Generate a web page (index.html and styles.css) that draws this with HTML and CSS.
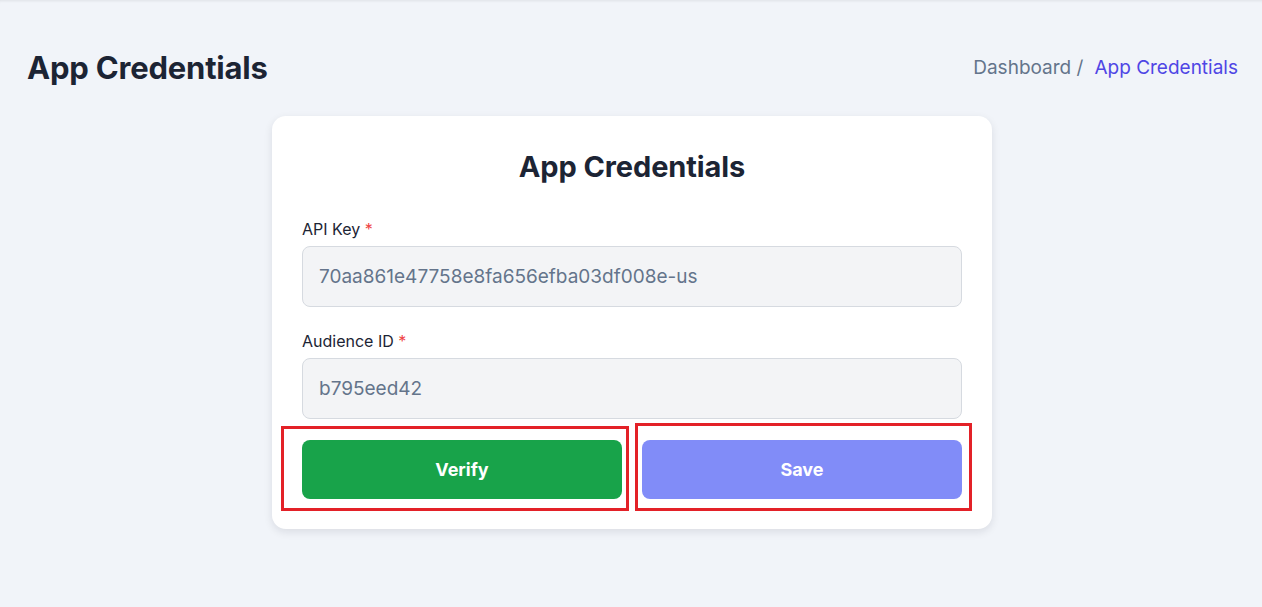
FILE: index.html
```html
<!DOCTYPE html>
<html lang="en">
<head>
<meta charset="utf-8">
<title>App Credentials</title>
<link rel="stylesheet" href="styles.css">
</head>
<body>
<main class="page">
  <header class="page-header">
    <h1 class="page-title">App Credentials</h1>
    <nav class="breadcrumb">
      <span class="crumb">Dashboard /</span>
      <span class="crumb crumb-active">App Credentials</span>
    </nav>
  </header>
  <section class="card">
    <h2 class="card-title">App Credentials</h2>
    <div class="field">
      <label class="field-label">API Key <span class="req">*</span></label>
      <div class="input">70aa861e47758e8fa656efba03df008e-us</div>
    </div>
    <div class="field">
      <label class="field-label">Audience ID <span class="req">*</span></label>
      <div class="input">b795eed42</div>
    </div>
    <div class="actions">
      <button class="btn btn-verify">Verify</button>
      <button class="btn btn-save">Save</button>
    </div>
  </section>
</main>
</body>
</html>
```

FILE: styles.css
```css
* { box-sizing: border-box; }
html, body { margin: 0; padding: 0; }
body {
  background: #f1f4f9;
  font-family: Inter, "Noto Sans", sans-serif;
  color: #1e293b;
  min-height: 607px;
  box-shadow: inset 0 3px 3px -2px rgba(0,0,0,0.08);
}
.page {
  padding: 45px 0 0 2px;
}
.page-header {
  display: flex;
  justify-content: space-between;
  align-items: center;
  height: 44px;
  padding: 0 24px 0 25px;
}
.page-title {
  margin: 0;
  font-size: 31px;
  font-weight: 700;
  color: #1c2434;
  letter-spacing: -0.2px;
}
.breadcrumb {
  display: flex;
  gap: 11px;
  font-size: 19px;
  color: #64748b;
}
.crumb-active { color: #4f46e5; }
.card {
  width: 720px;
  margin: 27px auto 0;
  background: #fff;
  border-radius: 14px;
  box-shadow: 0 3px 8px rgba(15, 23, 42, 0.1);
  padding: 33px 30px 30px;
}
.card-title {
  margin: 0 0 32px;
  text-align: center;
  font-size: 29px;
  line-height: 36px;
  font-weight: 700;
  color: #1c2434;
  letter-spacing: -0.1px;
}
.field { display: flex; flex-direction: column; }
.field + .field { margin-top: 22px; }
.field-label {
  font-size: 16px;
  line-height: 24px;
  color: #1c2434;
  margin-bottom: 5px;
}
.req { color: #ef4444; }
.input {
  height: 61px;
  border: 1px solid #d6dae0;
  background: #f3f4f6;
  border-radius: 8px;
  padding: 0 16px;
  display: flex;
  align-items: center;
  font-size: 19px;
  color: #64748b;
}
.actions {
  display: grid;
  grid-template-columns: 1fr 1fr;
  gap: 20px;
  margin-top: 21px;
}
.btn {
  position: relative;
  height: 59px;
  border: 0;
  border-radius: 8px;
  font-family: Inter, "Noto Sans", sans-serif;
  font-size: 18px;
  font-weight: 700;
  color: #fff;
}
.btn-verify { background: #18a34a; }
.btn-save { background: #818cf8; }
.btn::after {
  content: "";
  position: absolute;
  border: 3px solid #e32128;
}
.btn-verify::after { left: -21px; right: -7px; top: -14px; bottom: -12px; }
.btn-save::after { left: -7px; right: -10px; top: -17px; bottom: -12px; }
```
